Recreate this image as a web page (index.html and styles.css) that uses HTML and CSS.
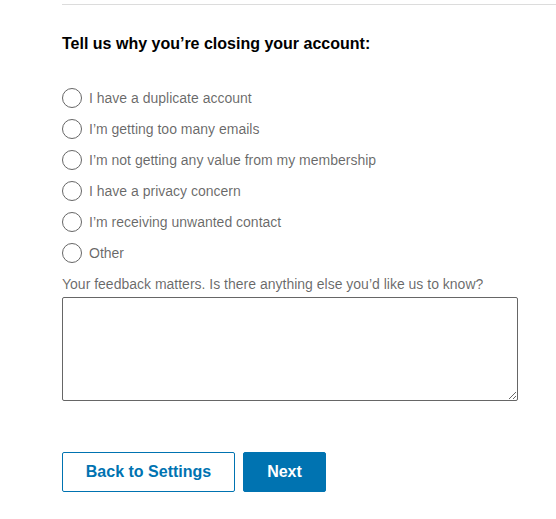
FILE: index.html
```html
<!DOCTYPE html>
<html lang="en">
<head>
<meta charset="utf-8">
<title>Close account</title>
<link rel="stylesheet" href="styles.css">
</head>
<body>
<div class="page">
  <div class="divider"></div>
  <form class="survey">
    <h2 class="title">Tell us why you’re closing your account:</h2>
    <ul class="options">
      <li><label class="option"><input type="radio" name="reason" class="radio"><span>I have a duplicate account</span></label></li>
      <li><label class="option"><input type="radio" name="reason" class="radio"><span>I’m getting too many emails</span></label></li>
      <li><label class="option"><input type="radio" name="reason" class="radio"><span>I’m not getting any value from my membership</span></label></li>
      <li><label class="option"><input type="radio" name="reason" class="radio"><span>I have a privacy concern</span></label></li>
      <li><label class="option"><input type="radio" name="reason" class="radio"><span>I’m receiving unwanted contact</span></label></li>
      <li><label class="option"><input type="radio" name="reason" class="radio"><span>Other</span></label></li>
    </ul>
    <label class="feedback-label" for="fb">Your feedback matters. Is there anything else you’d like us to know?</label>
    <textarea id="fb" class="feedback"></textarea>
    <div class="actions">
      <button type="button" class="btn btn-secondary">Back to Settings</button>
      <button type="button" class="btn btn-primary">Next</button>
    </div>
  </form>
</div>
</body>
</html>
```
FILE: styles.css
```css
* { box-sizing: border-box; }
html, body { margin: 0; padding: 0; background: #fff; }
body {
  font-family: "Liberation Sans", Arial, sans-serif;
  color: rgba(0,0,0,0.9);
}
.page {
  padding-left: 62px;
  padding-top: 4px;
}
.divider {
  border-top: 1px solid #dcdcdc;
  height: 0;
}
.survey {
  display: flex;
  flex-direction: column;
  align-items: flex-start;
}
.title {
  margin: 27px 0 0;
  font-size: 16px;
  line-height: 24px;
  font-weight: bold;
  color: #000;
}
.options {
  list-style: none;
  margin: 26px 0 0;
  padding: 0;
}
.option {
  display: flex;
  align-items: center;
  height: 31px;
  gap: 7px;
  font-size: 14px;
  color: rgba(0,0,0,0.6);
  cursor: pointer;
}
.radio {
  appearance: none;
  -webkit-appearance: none;
  margin: 0;
  width: 20px;
  height: 20px;
  border: 1px solid #666;
  border-radius: 50%;
  background: #fff;
  flex: none;
}
.feedback-label {
  margin-top: 6px;
  font-size: 14px;
  line-height: 20px;
  color: rgba(0,0,0,0.6);
}
.feedback {
  margin-top: 3px;
  width: 456px;
  height: 104px;
  border: 1px solid #666;
  border-radius: 2px;
  font-family: inherit;
  font-size: 14px;
  padding: 4px 8px;
  resize: both;
}
.actions {
  display: flex;
  gap: 8px;
  margin-top: 51px;
}
.btn {
  height: 40px;
  font-family: inherit;
  font-size: 16px;
  font-weight: bold;
  border-radius: 2px;
  padding: 0;
  cursor: pointer;
}
.btn-secondary {
  width: 173px;
  background: #fff;
  color: #0073b1;
  border: 1px solid #0073b1;
}
.btn-primary {
  width: 83px;
  background: #0073b1;
  color: #fff;
  border: 1px solid #0073b1;
}
```
